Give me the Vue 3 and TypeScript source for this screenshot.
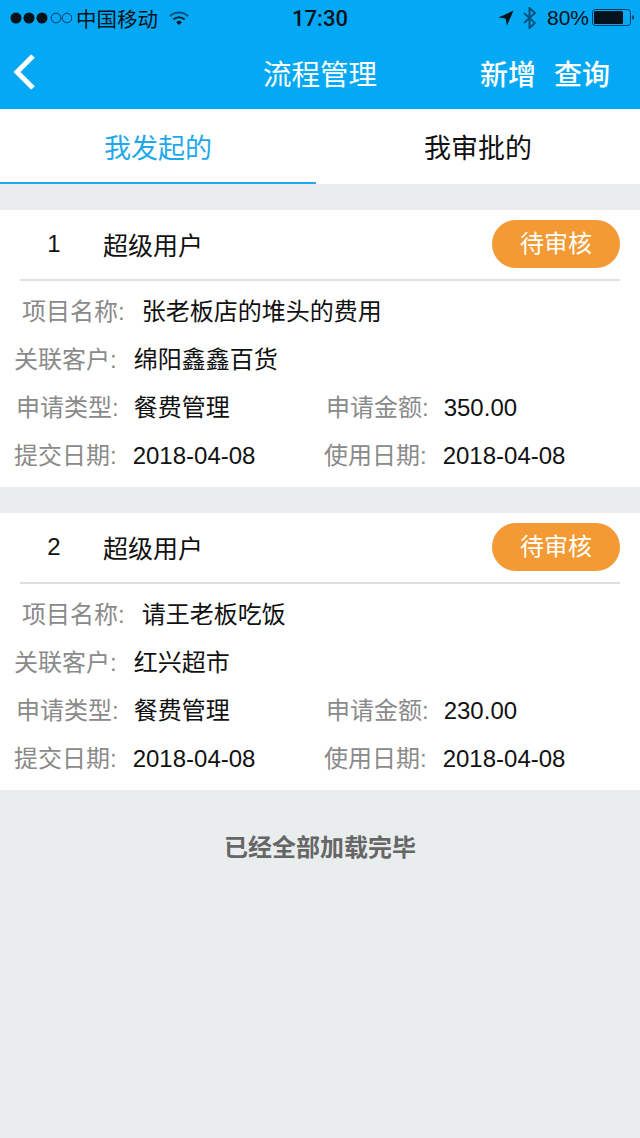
<template>
  <div class="page">
    <header class="top">
      <div class="status-bar">
        <div class="status-left">
          <svg class="signal" width="62" height="14" viewBox="0 0 62 14">
            <circle v-for="i in 3" :key="i" :cx="i * 13 - 7" cy="7" r="5.5" fill="#04121c" />
            <circle cx="46" cy="7" r="4.8" fill="none" stroke="#04385c" stroke-width="1" />
            <circle cx="58" cy="7" r="4.8" fill="none" stroke="#04385c" stroke-width="1" transform="translate(-1 0)" />
          </svg>
          <span class="carrier">中国移动</span>
          <svg class="wifi" width="20" height="15" viewBox="0 0 20 15">
            <path d="M1 5.2a13 13 0 0 1 18 0" fill="none" stroke="#05527f" stroke-width="2" />
            <path d="M4.3 8.4a8.3 8.3 0 0 1 11.4 0" fill="none" stroke="#04243a" stroke-width="2" />
            <path d="M7.2 11.2a4 4 0 0 1 5.6 0L10 14z" fill="#04121c" />
          </svg>
        </div>
        <div class="time">17:30</div>
        <div class="status-right">
          <svg width="16" height="16" viewBox="0 0 16 16">
            <path d="M15.5 0.5 0.5 7.5l7 1 1.5 7z" fill="#04121c" />
          </svg>
          <svg class="bt" width="14" height="22" viewBox="0 0 14 22">
            <path d="M1 6l11 10-5.5 5V1L12 6 1 16" fill="none" stroke="#05527f" stroke-width="2" />
          </svg>
          <span class="battery-text">80%</span>
          <svg width="44" height="18" viewBox="0 0 44 18">
            <rect x="0.5" y="0.5" width="38" height="16" rx="3" fill="none" stroke="#04385c" />
            <rect x="2" y="2" width="29" height="13" rx="1.5" fill="#04121c" />
            <path d="M40.5 6a3 3 0 0 1 0 5z" fill="#04121c" />
          </svg>
        </div>
      </div>
      <nav class="nav">
        <svg class="back" width="26" height="38" viewBox="0 0 26 38">
          <path d="M22 3 6 19l16 16" fill="none" stroke="#fff" stroke-width="5" />
        </svg>
        <h1 class="title">流程管理</h1>
        <div class="actions">
          <span>新增</span>
          <span>查询</span>
        </div>
      </nav>
    </header>

    <div class="tabs">
      <div class="tab active">我发起的</div>
      <div class="tab">我审批的</div>
    </div>

    <section v-for="(item, index) in items" :key="index" class="card">
      <div class="card-head">
        <span class="num">{{ index + 1 }}</span>
        <span class="user">超级用户</span>
        <span class="badge">待审核</span>
      </div>
      <div class="row row-name">
        <span class="label">项目名称:</span>
        <span class="value">{{ item.name }}</span>
      </div>
      <div class="row row-customer">
        <span class="label">关联客户:</span>
        <span class="value">{{ item.customer }}</span>
      </div>
      <div class="row row-type">
        <div class="cell">
          <span class="label">申请类型:</span>
          <span class="value">餐费管理</span>
        </div>
        <div class="cell">
          <span class="label">申请金额:</span>
          <span class="value">{{ item.amount }}</span>
        </div>
      </div>
      <div class="row row-date">
        <div class="cell">
          <span class="label">提交日期:</span>
          <span class="value">2018-04-08</span>
        </div>
        <div class="cell">
          <span class="label">使用日期:</span>
          <span class="value">2018-04-08</span>
        </div>
      </div>
    </section>

    <div class="end">已经全部加载完毕</div>
  </div>
</template>

<script setup lang="ts">
interface Item {
  name: string
  customer: string
  amount: string
}

const items: Item[] = [
  { name: '张老板店的堆头的费用', customer: '绵阳鑫鑫百货', amount: '350.00' },
  { name: '请王老板吃饭', customer: '红兴超市', amount: '230.00' }
]
</script>

<style>
html,
body {
  margin: 0;
  background: #e9edee;
}
</style>

<style scoped>
.page {
  min-height: 1138px;
  background: #e9edee;
  font-family: "Liberation Sans", "Noto Sans CJK SC", sans-serif;
  font-size: 24px;
  color: #111;
  overflow: hidden;
}

.top {
  height: 109px;
  background: #03a9f4;
}

.status-bar {
  height: 36px;
  display: grid;
  grid-template-columns: 1fr auto 1fr;
  align-items: center;
  color: #04121c;
}

.status-left {
  display: flex;
  align-items: center;
  padding-left: 10px;
}

.carrier {
  font-size: 20.5px;
  margin-left: 4px;
}

.wifi {
  margin-left: 11px;
}

.time {
  font-family: Roboto, "Liberation Sans", sans-serif;
  font-size: 22px;
  font-weight: 500;
}

.status-right {
  display: flex;
  align-items: center;
  justify-content: flex-end;
  padding-right: 4px;
}

.bt {
  margin-left: 9px;
}

.battery-text {
  font-size: 21px;
  margin: 0 3px 0 10px;
}

.nav {
  height: 73px;
  position: relative;
  display: flex;
  align-items: center;
  justify-content: center;
  color: #fff;
}

.back {
  position: absolute;
  left: 11px;
  top: 17px;
}

.title {
  margin: 0;
  font-size: 28.5px;
  font-weight: 400;
}

.actions {
  position: absolute;
  right: 30px;
  top: 17px;
  display: flex;
  gap: 18px;
  font-size: 28px;
  font-weight: 500;
}

.tabs {
  display: flex;
  height: 75px;
  background: #fff;
  margin-bottom: 26px;
}

.tab {
  flex: 1;
  display: flex;
  align-items: center;
  justify-content: center;
  font-size: 27px;
  box-sizing: border-box;
  padding-top: 1px;
  border-bottom: 2px solid transparent;
}

.tab:first-child {
  flex: 0 0 316px;
}

.tab.active {
  color: #1fa9ec;
  border-bottom-color: #1fa9ec;
}

.card {
  background: #fff;
  margin-bottom: 26px;
  padding-bottom: 10px;
}

.card-head {
  margin: 0 20px;
  height: 71px;
  box-sizing: border-box;
  border-bottom: 2px solid #dfdfdf;
  display: flex;
  align-items: center;
  padding-bottom: 1px;
}

.num {
  width: 83px;
  padding-right: 15px;
  box-sizing: border-box;
  text-align: center;
}

.user {
  flex: 1;
  font-size: 25px;
}

.badge {
  width: 128px;
  height: 48px;
  line-height: 48px;
  text-align: center;
  border-radius: 24px;
  background: #f49a35;
  color: #fff;
}

.row {
  height: 48px;
  display: flex;
  align-items: center;
}

.row:nth-of-type(2) {
  margin-top: 4px;
}

.card-head + .row {
  margin-top: 4px;
}

.label {
  color: #8a8a8a;
}

.value {
  color: #111;
}

.row-name {
  padding-left: 22px;
}

.row-name .label {
  margin-right: 17px;
}

.row-customer {
  padding-left: 14px;
}

.row-customer .label {
  margin-right: 17px;
}

.row-type {
  padding-left: 16px;
}

.row-type .cell {
  width: 310px;
}

.row-type .label {
  margin-right: 15px;
}

.row-date {
  padding-left: 14px;
}

.row-date .cell {
  width: 310px;
}

.row-date .label {
  margin-right: 16px;
}

.end {
  margin-top: 38px;
  text-align: center;
  color: #666;
  font-weight: 700;
}
</style>
